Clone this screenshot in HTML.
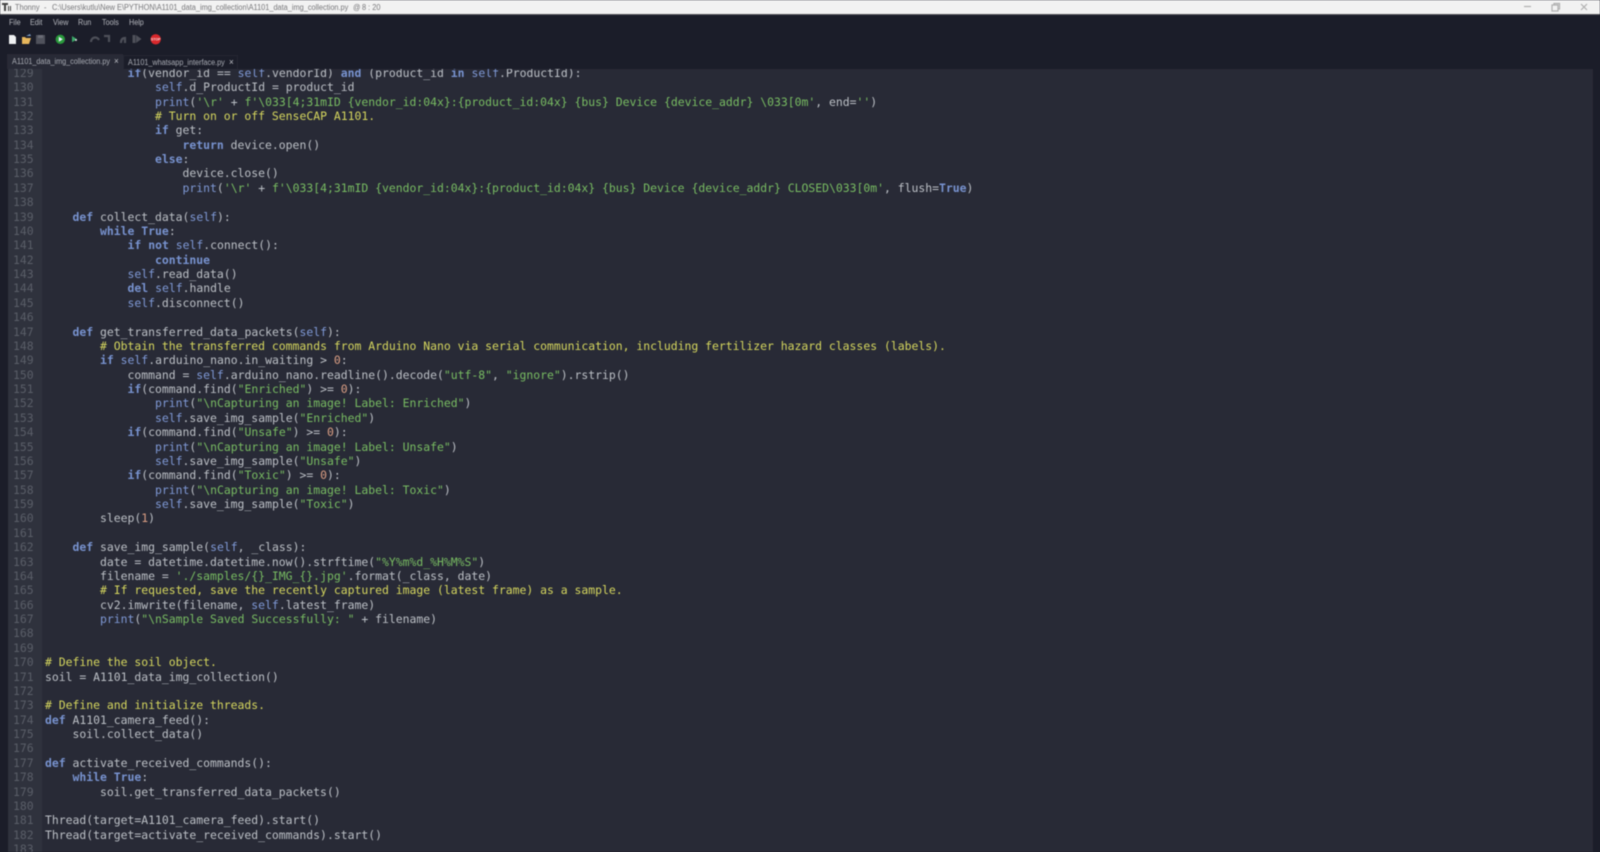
<!DOCTYPE html>
<html><head><meta charset="utf-8"><style>
html,body{margin:0;padding:0;width:1600px;height:852px;overflow:hidden;background:#1b1d29}
#root{position:relative;width:1600px;height:852px;overflow:hidden;filter:blur(.4px)}
#tb{position:absolute;left:0;top:0;width:1600px;height:14px;background:#f2f2f2;border-bottom:1px solid #55565c;box-sizing:content-box}
.t{position:absolute;font-family:"Liberation Sans",sans-serif;white-space:pre;transform-origin:0 0}
.h{top:1px;font-size:8px;line-height:13px;color:#77777a;transform:scaleX(.92)}
.m{top:16px;font-size:8.4px;line-height:12px;color:#b4b6bc;transform:scaleX(.86)}
.tl{font-size:8px;line-height:12px;color:#a9acb4;transform:scaleX(.904)}
#ed{position:absolute;left:8px;top:69px;width:1585px;height:783px;background:#282a36;overflow:hidden}
#gut{position:absolute;left:0;top:0;width:34px;height:783px;background:#2f323d}
#nums,#code{position:absolute;top:-3.2px;margin:0;font-family:"DejaVu Sans Mono",monospace;font-size:11.43px;line-height:14.375px;white-space:pre}
#nums{left:5px;color:#5a5e68}
#code{left:37px;color:#bcc0c6}
.k{color:#7893d0;font-weight:bold}.s{color:#7f99d6}.c{color:#d6d75e}.g{color:#78bc62}.n{color:#dc9f84}
.tab{position:absolute;box-sizing:border-box}
</style></head><body><div id="root">
<div id="tb"></div>
<svg style="position:absolute;left:2px;top:2px" width="10" height="10" viewBox="0 0 10 10"><path d="M0 1h6v2H4v6H2V3H0zM6 4h1v5H6zM8 4h1v5H8z" fill="#444"/></svg>
<div class="t h" style="left:15px">Thonny</div>
<div class="t h" style="left:44px">-</div>
<div class="t h" style="left:51.500px">C:\Users\kutlu\New E\PYTHON\A1101_data_img_collection\A1101_data_img_collection.py</div>
<div class="t h" style="left:353px">@</div>
<div class="t h" style="left:362px">8 : 20</div>
<svg style="position:absolute;left:1520px;top:1px" width="76" height="12" viewBox="0 0 76 12" fill="none" stroke="#b0b0b0" stroke-width="1.200"><path d="M4 5.500h7"/><path d="M32 4h6v6h-6zM34 4V2.500h5.500V8H38"/><path d="M61 3l6 6M67 3l-6 6"/></svg>
<div class="t m" style="left:9px">File</div><div class="t m" style="left:30px">Edit</div><div class="t m" style="left:52.500px">View</div><div class="t m" style="left:78px">Run</div><div class="t m" style="left:101.500px">Tools</div><div class="t m" style="left:129px">Help</div>
<svg style="position:absolute;left:0;top:30px" width="170" height="18" viewBox="0 0 170 18">
<path d="M9 5h5l2 2v7H9z" fill="#eef0f2"/>
<path d="M22 7h3l1 1h5l-2 6h-7z" fill="#e6b65c"/><path d="M26 6l4-2 1 2z" fill="#7fa0c8"/>
<rect x="36" y="5" width="9" height="9" fill="#50525c"/><rect x="38" y="5" width="5" height="3" fill="#6a6c76"/>
<circle cx="60.300" cy="9.300" r="4.700" fill="#2a9a3c"/><path d="M58.800 6.800l4 2.500-4 2.500z" fill="#eef"/>
<path d="M72 6l5 3.300-5 3z" fill="#3aa868"/><circle cx="76" cy="10" r="1" fill="#ddd"/>
<g fill="none" stroke="#4e5059" stroke-width="2.200"><path d="M91 12c0-5 6-6 8-2"/><path d="M104 6h5v6"/><path d="M121 13c0-3 1-5 4-5v5"/></g>
<path d="M136 5l5.500 4-5.500 4z" fill="#4e5059"/><rect x="132.500" y="5" width="3" height="8" fill="#4e5059"/>
<circle cx="155.700" cy="9.300" r="5.200" fill="#d8282c"/><text x="155.700" y="10.600" text-anchor="middle" font-family="Liberation Sans, sans-serif" font-size="3.600" font-weight="bold" fill="#f6dada">STOP</text>
</svg>
<div class="tab" style="left:7px;top:54px;width:116px;height:15px;background:#282a36"></div>
<div class="tab" style="left:123px;top:55px;width:115px;height:14px;background:#1b1d29;border:1px solid #252733;border-bottom:0"></div>
<div class="t tl" style="left:11.500px;top:55.500px">A1101_data_img_collection.py</div>
<div class="t tl" style="left:114px;top:55px;color:#c0c2c8;font-size:9px">×</div>
<div class="t tl" style="left:128px;top:57px">A1101_whatsapp_interface.py</div>
<div class="t tl" style="left:229px;top:56px;color:#c0c2c8;font-size:9px">×</div>
<div id="ed"><div id="gut"></div>
<pre id="nums">129
130
131
132
133
134
135
136
137
138
139
140
141
142
143
144
145
146
147
148
149
150
151
152
153
154
155
156
157
158
159
160
161
162
163
164
165
166
167
168
169
170
171
172
173
174
175
176
177
178
179
180
181
182
183</pre>
<pre id="code">            <span class="k">if</span>(vendor_id == <span class="s">self</span>.vendorId) <span class="k">and</span> (product_id <span class="k">in</span> <span class="s">self</span>.ProductId):
                <span class="s">self</span>.d_ProductId = product_id
                <span class="s">print</span>(<span class="g">'\r'</span> + <span class="g">f'\033[4;31mID {vendor_id:04x}:{product_id:04x} {bus} Device {device_addr} \033[0m'</span>, end=<span class="g">''</span>)
                <span class="c"># Turn on or off SenseCAP A1101.</span>
                <span class="k">if</span> get:
                    <span class="k">return</span> device.open()
                <span class="k">else</span>:
                    device.close()
                    <span class="s">print</span>(<span class="g">'\r'</span> + <span class="g">f'\033[4;31mID {vendor_id:04x}:{product_id:04x} {bus} Device {device_addr} CLOSED\033[0m'</span>, flush=<span class="k">True</span>)

    <span class="k">def</span> collect_data(<span class="s">self</span>):
        <span class="k">while</span> <span class="k">True</span>:
            <span class="k">if</span> <span class="k">not</span> <span class="s">self</span>.connect():
                <span class="k">continue</span>
            <span class="s">self</span>.read_data()
            <span class="k">del</span> <span class="s">self</span>.handle
            <span class="s">self</span>.disconnect()

    <span class="k">def</span> get_transferred_data_packets(<span class="s">self</span>):
        <span class="c"># Obtain the transferred commands from Arduino Nano via serial communication, including fertilizer hazard classes (labels).</span>
        <span class="k">if</span> <span class="s">self</span>.arduino_nano.in_waiting &gt; <span class="n">0</span>:
            command = <span class="s">self</span>.arduino_nano.readline().decode(<span class="g">"utf-8"</span>, <span class="g">"ignore"</span>).rstrip()
            <span class="k">if</span>(command.find(<span class="g">"Enriched"</span>) &gt;= <span class="n">0</span>):
                <span class="s">print</span>(<span class="g">"\nCapturing an image! Label: Enriched"</span>)
                <span class="s">self</span>.save_img_sample(<span class="g">"Enriched"</span>)
            <span class="k">if</span>(command.find(<span class="g">"Unsafe"</span>) &gt;= <span class="n">0</span>):
                <span class="s">print</span>(<span class="g">"\nCapturing an image! Label: Unsafe"</span>)
                <span class="s">self</span>.save_img_sample(<span class="g">"Unsafe"</span>)
            <span class="k">if</span>(command.find(<span class="g">"Toxic"</span>) &gt;= <span class="n">0</span>):
                <span class="s">print</span>(<span class="g">"\nCapturing an image! Label: Toxic"</span>)
                <span class="s">self</span>.save_img_sample(<span class="g">"Toxic"</span>)
        sleep(<span class="n">1</span>)

    <span class="k">def</span> save_img_sample(<span class="s">self</span>, _class):
        date = datetime.datetime.now().strftime(<span class="g">"%Y%m%d_%H%M%S"</span>)
        filename = <span class="g">'./samples/{}_IMG_{}.jpg'</span>.format(_class, date)
        <span class="c"># If requested, save the recently captured image (latest frame) as a sample.</span>
        cv2.imwrite(filename, <span class="s">self</span>.latest_frame)
        <span class="s">print</span>(<span class="g">"\nSample Saved Successfully: "</span> + filename)


<span class="c"># Define the soil object.</span>
soil = A1101_data_img_collection()

<span class="c"># Define and initialize threads.</span>
<span class="k">def</span> A1101_camera_feed():
    soil.collect_data()

<span class="k">def</span> activate_received_commands():
    <span class="k">while</span> <span class="k">True</span>:
        soil.get_transferred_data_packets()

Thread(target=A1101_camera_feed).start()
Thread(target=activate_received_commands).start()
</pre>
</div>
</div></body></html>
